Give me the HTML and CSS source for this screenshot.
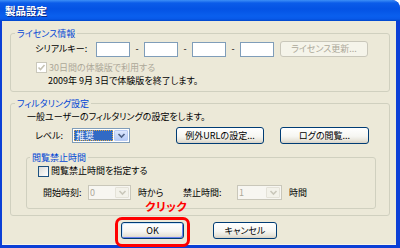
FILE: index.html
```html
<!DOCTYPE html>
<html lang="ja">
<head>
<meta charset="utf-8">
<title>製品設定</title>
<link rel="stylesheet" href="styles.css">
</head>
<body>
<div class="win">
  <div class="titlebar"><span class="title">製品設定</span></div>
  <div class="client">
    <fieldset class="grp g-license">
      <legend>ライセンス情報</legend>
      <div class="row serial">
        <span class="lbl lbl-serial">シリアルキー:</span>
        <span class="field"></span><span class="dash">-</span>
        <span class="field"></span><span class="dash">-</span>
        <span class="field"></span><span class="dash">-</span>
        <span class="field"></span>
        <span class="btn btn-dis btn-renew">ライセンス更新...</span>
      </div>
      <div class="row trial">
        <span class="cb cb-dis"><svg width="9" height="9" viewBox="0 0 9 9"><polyline points="1.5,4.5 3.5,6.5 7.5,2" fill="none" stroke="#c6c3b4" stroke-width="1.6"/></svg></span>
        <span class="dis-text">30日間の体験版で利用する</span>
      </div>
      <div class="row expire">2009年 9月 3日で体験版を終了します。</div>
    </fieldset>

    <fieldset class="grp g-filter">
      <legend>フィルタリング設定</legend>
      <div class="row desc">一般ユーザーのフィルタリングの設定をします。</div>
      <div class="row level">
        <span class="lbl lbl-level">レベル:</span>
        <span class="select sel-level">
          <span class="sel-val"><span class="hl">推奨</span></span>
          <span class="sel-btn"><svg width="9" height="9" viewBox="0 0 9 9"><polyline points="1.5,3 4.5,6 7.5,3" fill="none" stroke="#4d6185" stroke-width="1.6"/></svg></span>
        </span>
        <span class="btn btn-url">例外URLの設定...</span>
        <span class="btn btn-log">ログの閲覧...</span>
      </div>
      <fieldset class="grp g-block">
        <legend>閲覧禁止時間</legend>
        <div class="row blk-check">
          <span class="cb"></span>
          <span>閲覧禁止時間を指定する</span>
        </div>
        <div class="row times">
          <span class="lbl lbl-start">開始時刻:</span>
          <span class="select sel-dis sel-start">
            <span class="sel-val">0</span>
            <span class="sel-btn"><svg width="9" height="9" viewBox="0 0 9 9"><polyline points="1.5,3 4.5,6 7.5,3" fill="none" stroke="#c9c7ba" stroke-width="1.6"/></svg></span>
          </span>
          <span class="unit unit-from">時から</span>
          <span class="lbl lbl-dur">禁止時間:</span>
          <span class="select sel-dis sel-dur">
            <span class="sel-val">1</span>
            <span class="sel-btn"><svg width="9" height="9" viewBox="0 0 9 9"><polyline points="1.5,3 4.5,6 7.5,3" fill="none" stroke="#c9c7ba" stroke-width="1.6"/></svg></span>
          </span>
          <span class="unit unit-hours">時間</span>
        </div>
      </fieldset>
    </fieldset>

    <div class="actions">
      <span class="btn btn-ok">OK</span>
      <span class="btn btn-cancel">キャンセル</span>
    </div>
  </div>
  <span class="callout-label">クリック</span>
  <span class="callout-ring"></span>
</div>
</body>
</html>
```

FILE: styles.css
```css
html, body {
  margin: 0;
  padding: 0;
  width: 400px;
  height: 248px;
  overflow: hidden;
  background: #ffffff;
}

.win {
  position: relative;
  width: 400px;
  height: 248px;
  box-sizing: border-box;
  background: #0b3fd6;
  border-top-right-radius: 8px;
  display: flex;
  flex-direction: column;
  font-family: "Noto Sans CJK JP", "Noto Sans", sans-serif;
  font-size: 9px;
  line-height: 12px;
  font-feature-settings: "palt";
  color: #000000;
  overflow: hidden;
}

.titlebar {
  height: 21px;
  flex: none;
  border-top-right-radius: 8px;
  background: linear-gradient(#3d8ff7 0px, #0b5ce9 3px, #0453e4 9px, #0a5fee 16px, #0859e9 19px, #0046ca 21px);
  display: flex;
  align-items: center;
  padding-left: 5px;
}

.title {
  color: #ffffff;
  font-weight: bold;
  font-size: 10.5px;
  line-height: 12px;
  text-shadow: 1px 1px 0 #0a2a8a;
  font-feature-settings: normal;
}

.client {
  flex: 1;
  margin: 0 4px 3px 2px;
  background: #ece9d8;
  border-bottom: 1px solid #f6f4ec;
  padding-left: 8px;
  display: flex;
  flex-direction: column;
}

.grp {
  margin: 0;
  padding: 0;
  border: 1px solid #d0d0bf;
  border-radius: 3px;
  min-width: 0;
  box-sizing: border-box;
}

.grp > legend {
  color: #0046d5;
  line-height: 11px;
  padding: 0 2px;
  margin-left: 4px;
}

.row {
  display: flex;
  align-items: center;
  white-space: nowrap;
}

/* ---- license group ---- */
.g-license {
  width: 380px;
  margin-top: 7px;
  padding-bottom: 4px;
}

.serial {
  margin-top: 2px;
  height: 16px;
  padding-left: 24px;
}

.lbl-serial { width: 61px; }

.field {
  width: 34px;
  height: 15px;
  box-sizing: border-box;
  background: #ffffff;
  border: 1px solid #7f9db9;
}

.dash {
  width: 14px;
  text-align: center;
}

.btn {
  display: flex;
  align-items: center;
  justify-content: center;
  box-sizing: border-box;
  border: 1px solid #003c74;
  border-radius: 3px;
  background: linear-gradient(#ffffff 0%, #f6f6f2 55%, #e6e3d8 85%, #d6d0c5 100%);
  line-height: 12px;
}

.btn-dis {
  border-color: #c9c7ba;
  background: #f5f4ea;
  color: #aca899;
}

.btn-renew {
  margin-left: 6px;
  width: 88px;
  height: 16px;
}

.trial {
  margin-top: 5px;
  height: 11px;
  padding-left: 25px;
}

.cb {
  width: 11px;
  height: 11px;
  box-sizing: border-box;
  border: 1px solid #1c5180;
  background: linear-gradient(135deg, #dcdcd7, #ffffff);
  margin-right: 2px;
  display: flex;
  align-items: center;
  justify-content: center;
}

.cb-dis {
  border-color: #cac8bb;
  background: #ffffff;
}

.dis-text { color: #aca899; }

.expire {
  margin-top: 2px;
  padding-left: 37px;
}

/* ---- filter group ---- */
.g-filter {
  width: 380px;
  margin-top: 6px;
  padding-bottom: 6px;
}

.desc {
  margin-top: 2px;
  padding-left: 16px;
}

.level {
  margin-top: 4px;
  height: 17px;
  padding-left: 24px;
}

.lbl-level { width: 37px; }

.select {
  display: flex;
  box-sizing: border-box;
  height: 15px;
  border: 1px solid #7f9db9;
  background: #ffffff;
}

.sel-val {
  flex: 1;
  display: flex;
  align-items: center;
  padding-left: 1px;
}

.sel-btn {
  width: 14px;
  margin: 1px;
  box-sizing: border-box;
  border: 1px solid #b9cbf3;
  border-radius: 1px;
  background: linear-gradient(#dce6fd, #b6cbf6);
  display: flex;
  align-items: center;
  justify-content: center;
}

.sel-level { width: 58px; }

.hl {
  flex: 1;
  height: 11px;
  box-sizing: border-box;
  background: #316ac5;
  color: #ffffff;
  border: 1px dotted #d9a84a;
  line-height: 9px;
  padding-left: 1px;
}

.btn-url {
  margin-left: 46px;
  width: 88px;
  height: 17px;
}

.btn-log {
  margin-left: 16px;
  width: 89px;
  height: 17px;
}

.g-block {
  width: 350px;
  margin-top: 8px;
  margin-left: 15px;
  padding-bottom: 8px;
}

.g-block > legend { margin-left: 3px; }

.blk-check {
  margin-top: 2px;
  height: 12px;
  padding-left: 11px;
}

.blk-check .cb { margin-right: 2px; }

.times {
  margin-top: 8px;
  height: 15px;
  padding-left: 16px;
}

.lbl-start { width: 45px; }

.sel-dis {
  border-color: #c9c7ba;
  background: #f7f6f1;
  color: #aca899;
}

.sel-dis .sel-btn {
  border-color: #e4e2d8;
  background: #f3f2ea;
}

.sel-start { width: 43px; }

.unit-from {
  margin-left: 7px;
  width: 45px;
}

.lbl-dur { width: 54px; }

.sel-dur { width: 45px; }

.unit-hours { margin-left: 7px; }

/* ---- buttons ---- */
.actions {
  display: flex;
  margin-top: 6px;
  padding-left: 111px;
  gap: 29px;
}

.btn-ok {
  width: 63px;
  height: 17px;
  box-shadow: inset 1px 1px 0 #cee7ff, inset -1px -1px 0 #6982ee;
}

.btn-cancel {
  width: 64px;
  height: 17px;
}

/* ---- annotation overlay ---- */
.callout-label {
  position: absolute;
  left: 145px;
  top: 199px;
  color: #ff0000;
  font-weight: bold;
  font-size: 11.5px;
  line-height: 14px;
  letter-spacing: 0.5px;
}

.callout-ring {
  position: absolute;
  left: 115px;
  top: 217px;
  width: 75px;
  height: 30px;
  box-sizing: border-box;
  border: 3px solid #ff0000;
  border-radius: 7px;
}
```
